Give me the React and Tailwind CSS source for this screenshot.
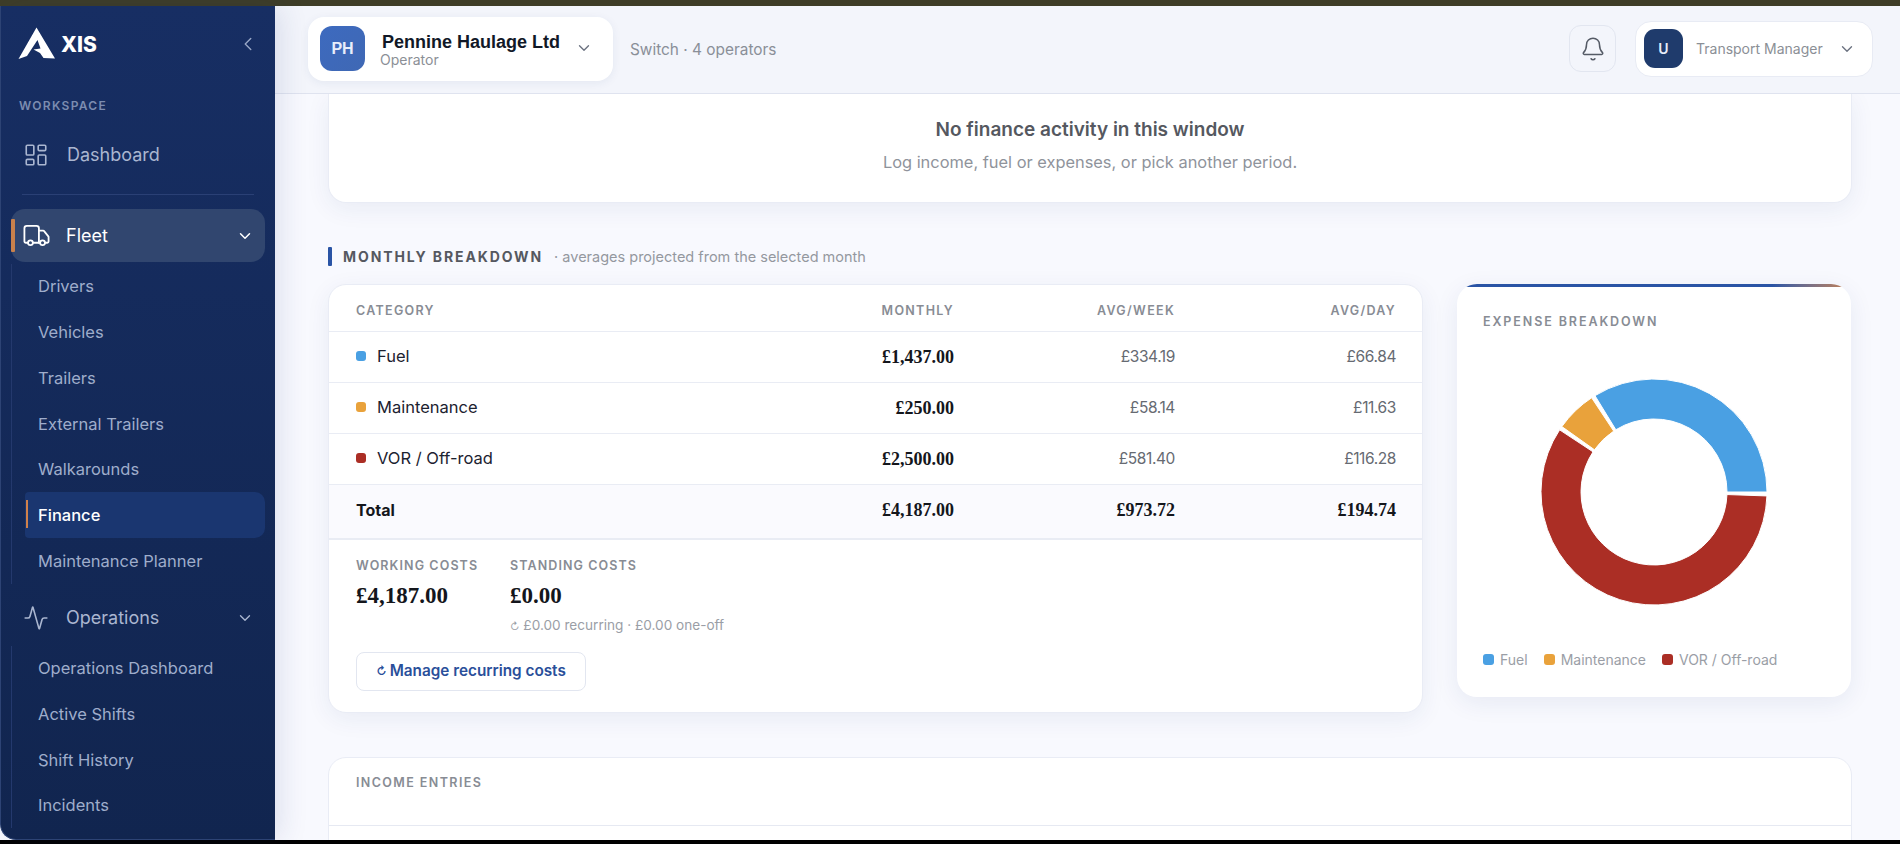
import React from "react";
import { Bell, ChevronDown, ChevronLeft, LayoutDashboard, Truck, Activity } from "lucide-react";

const sans = "font-['Inter','Liberation_Sans',sans-serif]";
const money = "font-['Liberation_Serif',serif]";

function arc(a0, a1) {
  const R = 113, r = 73, cx = 114, cy = 114;
  const p = (rad, a) => {
    const t = (a * Math.PI) / 180;
    return `${(cx + rad * Math.cos(t)).toFixed(2)} ${(cy - rad * Math.sin(t)).toFixed(2)}`;
  };
  const large = a1 - a0 > 180 ? 1 : 0;
  return `M${p(R, a0)}A${R} ${R} 0 ${large} 0 ${p(R, a1)}L${p(r, a1)}A${r} ${r} 0 ${large} 1 ${p(r, a0)}Z`;
}

function SubItem({ label, active }) {
  if (active) {
    return (
      <div className="relative flex h-[45.6px] items-center rounded-r-[10px] rounded-l-[4px] bg-[#1a3670] pl-[13px] text-[16.5px] font-medium text-white">
        <span className="absolute left-[1px] top-[8px] h-[28px] w-[2px] bg-[#d0814a]" />
        {label}
      </div>
    );
  }
  return <div className="flex h-[45.7px] items-center pl-[13px] text-[16.5px] text-[#9fadcb]">{label}</div>;
}

function Sidebar() {
  return (
    <aside className="relative z-10 flex w-[275px] shrink-0 flex-col overflow-hidden rounded-bl-[16px] border-l border-b border-[#2d4374] bg-gradient-to-b from-[#172e63] to-[#11254f] shadow-[6px_0_28px_rgba(30,50,120,0.12)]">
      <div className="flex h-[76px] items-center justify-between pl-[17px] pr-[16px]">
        <div className="flex items-center">
          <svg width="38" height="32" viewBox="0 0 38 32" className="mt-[-2px]">
            <path fill="#fff" d="M18.5 0.5 L37 31.5 L25.5 31 L22 26 L15.5 22.5 L22.5 21.5 L19.5 13 L9 29 L0.5 32 Z" />
          </svg>
          <span className="ml-[5px] text-[21px] font-extrabold leading-none text-white">XIS</span>
        </div>
        <ChevronLeft size={22} strokeWidth={1.6} className="text-[#94a3c3]" />
      </div>
      <div className="mt-[15px] pl-[18px] text-[12px] font-semibold tracking-[1.3px] text-[#7c8cb0]">WORKSPACE</div>
      <div className="mt-[26px] flex items-center pl-[22px] text-[18px] text-[#aab6d0]">
        <LayoutDashboard size={26} strokeWidth={1.5} className="text-[#aab6d0]" />
        <span className="ml-[18px]">Dashboard</span>
      </div>
      <div className="mx-[21px] mt-[26px] h-px bg-[#2a4075]" />
      <div className="relative mx-[10px] mt-[14px] flex h-[53px] items-center rounded-[14px] bg-[#31466f] pl-[11px] pr-[11px] text-[18px] text-white">
        <span className="absolute left-0 top-[10px] h-[33px] w-[4px] rounded-[1px] bg-[#c9814c]" />
        <Truck size={29} strokeWidth={1.5} />
        <span className="ml-[15px] flex-1">Fleet</span>
        <ChevronDown size={18} strokeWidth={2} />
      </div>
      <div className="ml-[10px] mr-[10px] mt-[2px] border-l border-[#24396d] pl-[13px]">
        {["Drivers", "Vehicles", "Trailers", "External Trailers", "Walkarounds"].map((s) => (
          <SubItem key={s} label={s} />
        ))}
        <SubItem label="Finance" active />
        <SubItem label="Maintenance Planner" />
      </div>
      <div className="mt-[12px] flex h-[44px] items-center pl-[22px] pr-[21px] text-[18px] text-[#aab6d0]">
        <Activity size={26} strokeWidth={1.5} />
        <span className="ml-[17px] flex-1">Operations</span>
        <ChevronDown size={18} strokeWidth={1.8} />
      </div>
      <div className="ml-[10px] mr-[10px] mt-[6px] border-l border-[#24396d] pl-[13px]">
        {["Operations Dashboard", "Active Shifts", "Shift History", "Incidents"].map((s) => (
          <SubItem key={s} label={s} />
        ))}
      </div>
    </aside>
  );
}

function Topbar() {
  return (
    <header className="flex h-[88px] shrink-0 items-center border-b border-[#dfe3ef] bg-[#f3f5fb] pb-[2px] pl-[33px] pr-[27px]">
      <div className="flex h-[64px] w-[305px] items-center rounded-[16px] bg-white pl-[12px] shadow-[0_2px_10px_rgba(30,50,120,0.07)]">
        <div className="flex h-[45px] w-[45px] items-center justify-center rounded-[12px] bg-gradient-to-br from-[#3d6abf] to-[#3f68b4] font-['Liberation_Sans',sans-serif] text-[16px] font-bold text-[#e8eefb]">PH</div>
        <div className="ml-[15px] w-[193px]">
          <div className="pl-[2px] pt-[1px] font-['Liberation_Sans',sans-serif] text-[18px] font-bold leading-[20px] text-[#111827]">Pennine Haulage Ltd</div>
          <div className="text-[14px] leading-[15px] text-[#8b8f96]">Operator</div>
        </div>
        <ChevronDown size={18} strokeWidth={1.8} className="ml-[2px] mt-[-2px] text-[#6b7280]" />
      </div>
      <div className="ml-[17px] flex-1 pt-[2px] text-[15.4px] text-[#8a8f98]">Switch · 4 operators</div>
      <div className="flex h-[47px] w-[47px] items-center justify-center rounded-[12px] border border-[#e2e6f0] text-[#555b66]">
        <Bell size={26} strokeWidth={1.4} />
      </div>
      <div className="ml-[19px] flex h-[56px] w-[238px] items-center rounded-[16px] border border-[#e8ebf4] bg-white pl-[8px]">
        <div className="flex h-[39px] w-[39px] items-center justify-center rounded-[11px] bg-[#1f3b6c] text-[14px] font-semibold text-[#e8eefb]">U</div>
        <span className="ml-[13px] flex-1 text-[14px] text-[#8b8f96]">Transport Manager</span>
        <ChevronDown size={18} strokeWidth={1.8} className="mr-[16px] text-[#6b7280]" />
      </div>
    </header>
  );
}

const row = "grid grid-cols-[1fr_221px_221px_221px] items-center pl-[27px] pr-[26px]";

function Row({ color, label, m, w, d }) {
  return (
    <div className={`${row} h-[51px] border-b border-[#e9ecf4]`}>
      <div className="mt-[-2px] flex items-center text-[16.5px] text-[#1c2230]">
        <span className="h-[10px] w-[10px] rounded-[3px]" style={{ background: color }} />
        <span className="ml-[11px]">{label}</span>
      </div>
      <div className={`${money} text-right text-[18px] font-bold text-[#14161c]`}>{m}</div>
      <div className="text-right text-[15.5px] tracking-[-0.4px] text-[#666a72]">{w}</div>
      <div className="text-right text-[15.5px] tracking-[-0.4px] text-[#666a72]">{d}</div>
    </div>
  );
}

function MonthlyTable() {
  return (
    <div className="h-[429px] w-[1095px] shrink-0 rounded-[18px] border border-[#e9ecf5] bg-white shadow-[0_6px_24px_rgba(30,50,120,0.07)]">
      <div className={`${row} h-[47px] border-b border-[#e9ecf4] pt-[7px] text-[12.5px] font-semibold tracking-[1.3px] text-[#888c94]`}>
        <div>CATEGORY</div>
        <div className="text-right">MONTHLY</div>
        <div className="text-right">AVG/WEEK</div>
        <div className="text-right">AVG/DAY</div>
      </div>
      <Row color="#4aa0e3" label="Fuel" m="£1,437.00" w="£334.19" d="£66.84" />
      <Row color="#e9a23b" label="Maintenance" m="£250.00" w="£58.14" d="£11.63" />
      <Row color="#ab2e25" label="VOR / Off-road" m="£2,500.00" w="£581.40" d="£116.28" />
      <div className={`${row} h-[55px] border-b-2 border-[#e9ecf4] bg-[#fafafe] text-[#14161c]`}>
        <div className="mt-[-4px] text-[16px] font-bold">Total</div>
        <div className={`${money} mt-[-2px] text-right text-[18px] font-bold`}>£4,187.00</div>
        <div className={`${money} mt-[-2px] text-right text-[18px] font-bold`}>£973.72</div>
        <div className={`${money} mt-[-2px] text-right text-[18px] font-bold`}>£194.74</div>
      </div>
      <div className="pl-[27px] pt-[18px]">
        <div className="flex">
          <div className="w-[154px]">
            <div className="text-[12.5px] font-semibold leading-[16px] tracking-[1.1px] text-[#888c94]">WORKING COSTS</div>
            <div className={`${money} mt-[7px] text-[23px] font-bold leading-[30px] text-[#14161c]`}>£4,187.00</div>
          </div>
          <div>
            <div className="text-[12.5px] font-semibold leading-[16px] tracking-[1.1px] text-[#888c94]">STANDING COSTS</div>
            <div className={`${money} mt-[7px] text-[23px] font-bold leading-[30px] text-[#14161c]`}>£0.00</div>
            <div className="mt-[6px] text-[13.6px] leading-[16px] text-[#9a9ea6]"><span className="text-[10px]">↻</span> £0.00 recurring · £0.00 one-off</div>
          </div>
        </div>
        <div className="mt-[18px] flex h-[39px] w-[230px] items-center justify-center rounded-[8px] border border-[#e2e6f0] text-[15.3px] font-semibold text-[#2a4f9a]"><span className="mr-[3px] text-[11px] font-bold">↻</span>Manage recurring costs</div>
      </div>
    </div>
  );
}

function LegendItem({ color, label, className }) {
  return (
    <div className={`flex items-center text-[14px] text-[#9a9ea6] ${className || ""}`}>
      <span className="h-[11px] w-[11px] rounded-[3px]" style={{ background: color }} />
      <span className="ml-[6px]">{label}</span>
    </div>
  );
}

function ExpenseCard() {
  const usable = 360 - 3 * 2;
  const a = (1437 / 4187) * usable;
  const b = (250 / 4187) * usable;
  return (
    <div className="relative h-[413px] w-[394px] shrink-0 overflow-hidden rounded-[20px] bg-white shadow-[0_6px_24px_rgba(30,50,120,0.08)]">
      <div className="h-[3px] bg-gradient-to-r from-[#2a54a5] via-[#2a54a5] via-80% to-[#c9814c]" />
      <div className="pl-[26px] pt-[27px] text-[12.5px] font-semibold leading-[16px] tracking-[1.9px] text-[#888c94]">EXPENSE BREAKDOWN</div>
      <svg width="228" height="228" viewBox="0 0 228 228" className="mx-auto mt-[48px]">
        <path d={arc(0, a)} fill="#4aa0e3" stroke="#fff" strokeWidth="1" />
        <path d={arc(a + 2, a + 2 + b)} fill="#e9a23b" stroke="#fff" strokeWidth="1" />
        <path d={arc(a + b + 4, 358)} fill="#ab2e25" stroke="#fff" strokeWidth="1" />
      </svg>
      <div className="mt-[43px] flex pl-[26px]">
        <LegendItem color="#4aa0e3" label="Fuel" />
        <LegendItem color="#e9a23b" label="Maintenance" className="ml-[16px]" />
        <LegendItem color="#ab2e25" label="VOR / Off-road" className="ml-[16px]" />
      </div>
    </div>
  );
}

function Content() {
  return (
    <main className="flex-1 overflow-hidden bg-[#f8f9fe] pl-[53px] pr-[48px]">
      <div className="flex h-[109px] w-[1524px] flex-col items-center justify-center rounded-b-[18px] border border-t-0 border-[#e9ecf5] bg-white shadow-[0_6px_24px_rgba(30,50,120,0.07)]">
        <div className="mt-[-4px] text-[19px] font-semibold leading-[24px] text-[#555860]">No finance activity in this window</div>
        <div className="mt-[8px] text-[16.4px] leading-[24px] text-[#8f939b]">Log income, fuel or expenses, or pick another period.</div>
      </div>
      <div className="mt-[44px] flex h-[19px] items-center">
        <span className="h-[19px] w-[4px] rounded-[1px] bg-[#2a54a5]" />
        <span className="ml-[11px] text-[14px] font-bold tracking-[1.9px] text-[#555860]">MONTHLY BREAKDOWN</span>
        <span className="ml-[11px] text-[14.5px] text-[#94989f]">· averages projected from the selected month</span>
      </div>
      <div className="mt-[18px] flex items-start gap-[34px]">
        <MonthlyTable />
        <ExpenseCard />
      </div>
      <div className="mt-[44px] h-[200px] w-[1524px] rounded-[18px] border border-[#e9ecf5] bg-white">
        <div className="flex h-[68px] items-center border-b border-[#e6e9f2] pb-[16px] pl-[27px] text-[12.5px] font-semibold tracking-[1.4px] text-[#888c94]">INCOME ENTRIES</div>
      </div>
    </main>
  );
}

export default function App() {
  return (
    <div className={`${sans} flex h-[844px] w-[1900px] flex-col overflow-hidden bg-black`}>
      <div className="h-[6px] shrink-0 bg-[#3e3d27]" />
      <div className="flex h-[834px] shrink-0 bg-[#f8f9fe]">
        <Sidebar />
        <div className="flex min-w-0 flex-1 flex-col">
          <Topbar />
          <Content />
        </div>
      </div>
      <div className="flex-1 bg-black" />
    </div>
  );
}
